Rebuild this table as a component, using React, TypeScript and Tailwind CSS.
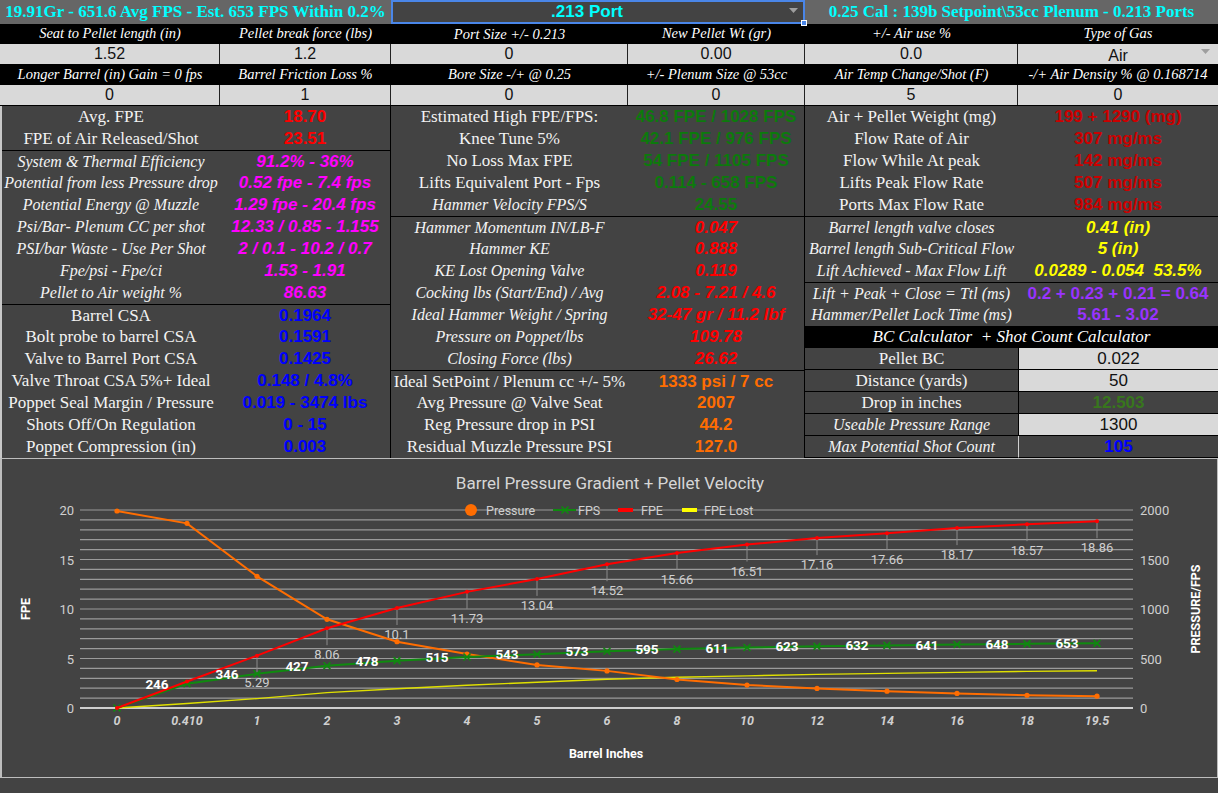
const serif = "font-['Liberation_Serif',serif]";
const sans = "font-['Liberation_Sans',Arial,sans-serif]";

type Row = { l: string; v: string; li?: boolean; c: string; t?: boolean };

const left: Row[] = [
  { l: 'Avg. FPE', v: '18.70', c: 'text-[#ff0000]' },
  { l: 'FPE of Air Released/Shot', v: '23.51', c: 'text-[#ff0000]' },
  { l: 'System & Thermal Efficiency', v: '91.2% - 36%', li: true, c: 'italic text-[#ff00ff]', t: true },
  { l: 'Potential from less Pressure drop', v: '0.52 fpe - 7.4 fps', li: true, c: 'italic text-[#ff00ff]' },
  { l: 'Potential Energy @ Muzzle', v: '1.29 fpe - 20.4 fps', li: true, c: 'italic text-[#ff00ff]' },
  { l: 'Psi/Bar- Plenum CC per shot', v: '12.33 / 0.85 - 1.155', li: true, c: 'italic text-[#ff00ff]' },
  { l: 'PSI/bar Waste - Use Per Shot', v: '2 / 0.1 - 10.2 / 0.7', li: true, c: 'italic text-[#ff00ff]' },
  { l: 'Fpe/psi - Fpe/ci', v: '1.53 - 1.91', li: true, c: 'italic text-[#ff00ff]' },
  { l: 'Pellet to Air weight %', v: '86.63', li: true, c: 'italic text-[#ff00ff]' },
  { l: 'Barrel CSA', v: '0.1964', c: 'text-[#0000ff]', t: true },
  { l: 'Bolt probe to barrel CSA', v: '0.1591', c: 'text-[#0000ff]' },
  { l: 'Valve to Barrel Port CSA', v: '0.1425', c: 'text-[#0000ff]' },
  { l: 'Valve Throat CSA 5%+ Ideal', v: '0.148 / 4.8%', c: 'text-[#0000ff]' },
  { l: 'Poppet Seal Margin / Pressure', v: '0.019 - 3474 lbs', c: 'text-[#0000ff]' },
  { l: 'Shots Off/On Regulation', v: '0 - 15', c: 'text-[#0000ff]' },
  { l: 'Poppet Compression (in)', v: '0.003', c: 'text-[#0000ff]' },
];

const middle: Row[] = [
  { l: 'Estimated High FPE/FPS:', v: '46.8 FPE / 1028 FPS', c: 'text-[#0c7a0c]' },
  { l: 'Knee Tune 5%', v: '42.1 FPE / 976 FPS', c: 'text-[#0c7a0c]' },
  { l: 'No Loss Max FPE', v: '54 FPE / 1105 FPS', c: 'text-[#0c7a0c]' },
  { l: 'Lifts Equivalent Port - Fps', v: '0.114 - 658 FPS', c: 'text-[#0c7a0c]' },
  { l: 'Hammer Velocity FPS/S', v: '24.55', li: true, c: 'text-[#0c7a0c]' },
  { l: 'Hammer Momentum IN/LB-F', v: '0.047', li: true, c: 'italic text-[#ff0000]', t: true },
  { l: 'Hammer KE', v: '0.888', li: true, c: 'italic text-[#ff0000]' },
  { l: 'KE Lost Opening Valve', v: '0.119', li: true, c: 'italic text-[#ff0000]' },
  { l: 'Cocking lbs (Start/End) / Avg', v: '2.08 - 7.21 / 4.6', li: true, c: 'italic text-[#ff0000]' },
  { l: 'Ideal Hammer Weight / Spring', v: '32-47 gr / 11.2 lbf', li: true, c: 'italic text-[#ff0000]' },
  { l: 'Pressure on Poppet/lbs', v: '109.78', li: true, c: 'italic text-[#ff0000]' },
  { l: 'Closing Force (lbs)', v: '26.62', li: true, c: 'italic text-[#ff0000]' },
  { l: 'Ideal SetPoint / Plenum cc +/- 5%', v: '1333 psi / 7 cc', c: 'text-[#ff6d01]', t: true },
  { l: 'Avg Pressure @ Valve Seat', v: '2007', c: 'text-[#ff6d01]' },
  { l: 'Reg Pressure drop in PSI', v: '44.2', c: 'text-[#ff6d01]' },
  { l: 'Residual Muzzle Pressure PSI', v: '127.0', c: 'text-[#ff6d01]' },
];

const right: Row[] = [
  { l: 'Air + Pellet Weight (mg)', v: '199 + 1290 (mg)', c: 'text-[#cc0000]' },
  { l: 'Flow Rate of Air', v: '307 mg/ms', c: 'text-[#cc0000]' },
  { l: 'Flow While At peak', v: '142 mg/ms', c: 'text-[#cc0000]' },
  { l: 'Lifts Peak Flow Rate', v: '507 mg/ms', c: 'text-[#cc0000]' },
  { l: 'Ports Max Flow Rate', v: '984 mg/ms', c: 'text-[#cc0000]' },
  { l: 'Barrel length valve closes', v: '0.41 (in)', li: true, c: 'italic text-[#ffff00]', t: true },
  { l: 'Barrel length Sub-Critical Flow', v: '5 (in)', li: true, c: 'italic text-[#ffff00]' },
  { l: 'Lift Achieved - Max Flow Lift', v: '0.0289 - 0.054  53.5%', li: true, c: 'italic text-[#ffff00]' },
  { l: 'Lift + Peak + Close = Ttl (ms)', v: '0.2 + 0.23 + 0.21 = 0.64', li: true, c: 'text-[#9933ff]', t: true },
  { l: 'Hammer/Pellet Lock Time (ms)', v: '5.61 - 3.02', li: true, c: 'text-[#9933ff]' },
];

function DataRow({ r, lw }: { r: Row; lw: string }) {
  return (
    <div className={`flex h-[22px] ${r.t ? 'border-t border-black' : ''}`}>
      <div
        className={`${lw} flex items-center justify-center whitespace-nowrap text-[#f3f3f3] ${serif} ${r.li ? 'italic text-[16px]' : 'text-[17px]'}`}
      >
        {r.l}
      </div>
      <div className={`flex-1 flex items-center justify-center whitespace-pre text-[17px] font-bold ${sans} ${r.c}`}>
        {r.v}
      </div>
    </div>
  );
}

function Caret() {
  return (
    <svg width="9" height="5" viewBox="0 0 9 5">
      <polygon points="0,0 9,0 4.5,5" fill="#9e9e9e" />
    </svg>
  );
}

const cats = ['0', '0.410', '1', '2', '3', '4', '5', '6', '8', '10', '12', '14', '16', '18', '19.5'];
const fpe = [0, 2.68, 5.29, 8.06, 10.1, 11.73, 13.04, 14.52, 15.66, 16.51, 17.16, 17.66, 18.17, 18.57, 18.86];
const fps = [0, 246, 346, 427, 478, 515, 543, 573, 595, 611, 623, 632, 641, 648, 653];
const pressure = [1990, 1865, 1330, 896, 670, 545, 435, 375, 288, 232, 198, 170, 147, 129, 119];
const lost = [0, 0.45, 0.95, 1.55, 1.95, 2.3, 2.6, 2.9, 3.1, 3.25, 3.4, 3.5, 3.6, 3.7, 3.77];

const X = (i: number) => 117 + i * 70;
const YL = (v: number) => 708 - v * 9.9;
const YR = (v: number) => 708 - v * 0.099;
const pts = (arr: number[], y: (v: number) => number) => arr.map((v, i) => `${X(i)},${y(v)}`).join(' ');

function Chart() {
  return (
    <svg width="1214" height="318" className="block" fontFamily="Roboto, 'Liberation Sans', sans-serif">
      <g transform="translate(-2 -459)">
        <text x="610" y="489" textAnchor="middle" fontSize="17" fill="#d6d6d6">
          Barrel Pressure Gradient + Pellet Velocity
        </text>
        {Array.from({ length: 21 }, (_, v) => (
          <line
            key={v}
            x1="80"
            x2="1133"
            y1={YL(v)}
            y2={YL(v)}
            stroke={v === 0 ? '#cfcfcf' : '#9a9a9a'}
            strokeWidth={v === 0 ? 2 : 1.2}
          />
        ))}
        {[0, 5, 10, 15, 20].map((v) => (
          <text key={v} x="74" y={YL(v) + 5} textAnchor="end" fontSize="13" fill="#d0d0d0">
            {v}
          </text>
        ))}
        {[0, 500, 1000, 1500, 2000].map((v) => (
          <text key={v} x="1140" y={YR(v) + 5} fontSize="13" fill="#d0d0d0">
            {v}
          </text>
        ))}
        {cats.map((c, i) => (
          <text key={c} x={X(i)} y="725" textAnchor="middle" fontSize="12.5" fontWeight="bold" fontStyle="italic" fill="#d0d0d0">
            {c}
          </text>
        ))}
        <text x="606" y="758" textAnchor="middle" fontSize="12.5" fontWeight="bold" fill="#ffffff">
          Barrel Inches
        </text>
        <text transform="translate(30 609) rotate(-90)" textAnchor="middle" fontSize="12.5" fontWeight="bold" fill="#ffffff">
          FPE
        </text>
        <text transform="translate(1200 609) rotate(-90)" textAnchor="middle" fontSize="12.5" fontWeight="bold" fill="#ffffff">
          PRESSURE/FPS
        </text>

        {/* legend */}
        <circle cx="471" cy="510" r="6" fill="#ff6d01" />
        <text x="486" y="514.5" fontSize="12.5" fill="#d0d0d0">Pressure</text>
        <line x1="553" x2="576" y1="510" y2="510" stroke="#0f8a0f" strokeWidth="2" />
        <path d="M561.5 506.5 L568.5 513.5 M568.5 506.5 L561.5 513.5" stroke="#0f8a0f" strokeWidth="1.6" />
        <text x="578" y="514.5" fontSize="12.5" fill="#d0d0d0">FPS</text>
        <rect x="618" y="508" width="15" height="4" fill="#ff0000" />
        <text x="641" y="514.5" fontSize="12.5" fill="#d0d0d0">FPE</text>
        <rect x="682" y="508" width="15" height="4" fill="#ffff00" />
        <text x="704" y="514.5" fontSize="12.5" fill="#d0d0d0">FPE Lost</text>

        {/* FPE leader lines + labels */}
        {fpe.map((v, i) =>
          i < 2 ? null : (
            <g key={i}>
              <line x1={X(i)} x2={X(i)} y1={YL(v)} y2={YL(v) + 17} stroke="#8c8c8c" strokeWidth="1" />
              <text x={X(i)} y={YL(v) + 31} textAnchor="middle" fontSize="13" fill="#cfcfcf">
                {v === 10.1 ? '10.1' : v.toFixed(2)}
              </text>
            </g>
          ),
        )}

        <polyline points={pts(lost, YL)} fill="none" stroke="#e0e000" strokeWidth="1.4" />
        <polyline points={pts(pressure, YR)} fill="none" stroke="#ff6d01" strokeWidth="2" />
        {pressure.map((v, i) => (
          <circle key={i} cx={X(i)} cy={YR(v)} r="2.6" fill="#ff6d01" />
        ))}
        <polyline points={pts(fps, YR)} fill="none" stroke="#0f8a0f" strokeWidth="2" />
        {fps.map((v, i) => (
          <path
            key={i}
            d={`M${X(i) - 3.5} ${YR(v) - 3.5} L${X(i) + 3.5} ${YR(v) + 3.5} M${X(i) + 3.5} ${YR(v) - 3.5} L${X(i) - 3.5} ${YR(v) + 3.5}`}
            stroke="#0f8a0f"
            strokeWidth="1.6"
          />
        ))}
        <polyline points={pts(fpe, YL)} fill="none" stroke="#ff0000" strokeWidth="2" />
        {fpe.map((v, i) => (
          <circle key={i} cx={X(i)} cy={YL(v)} r="2" fill="#ff0000" />
        ))}
        {fps.map((v, i) =>
          i === 0 ? null : (
            <text key={i} x={X(i) - 30} y={YR(v) + 5} textAnchor="middle" fontSize="13.5" fontWeight="bold" fill="#ffffff">
              {v}
            </text>
          ),
        )}
      </g>
    </svg>
  );
}

export default function App() {
  const blackLabel = `flex items-center justify-center whitespace-nowrap bg-black text-[14.5px] italic text-white ${serif}`;
  const input = `flex items-center justify-center bg-[#d9d9d9] text-[16px] text-[#111] border-r border-[#222] ${sans}`;

  return (
    <div className="w-[1218px] h-[793px] overflow-hidden bg-[#434343]">
      {/* header grid */}
      <div className="grid grid-cols-[220px_171px_237px_177px_213px_200px]">
        <div className={`col-span-2 h-[24px] flex items-center justify-center bg-[#666666] text-[17px] font-bold text-[#00ffff] whitespace-nowrap ${serif}`}>
          19.91Gr - 651.6 Avg FPS - Est. 653 FPS Within 0.2%
        </div>
        <div className="col-span-2 relative h-[24px] flex items-center justify-center pr-[22px] bg-[#434343] border-2 border-[#4a86e8]">
          <span className={`text-[17px] font-bold text-[#00ffff] ${sans}`}>.213 Port</span>
          <span className="absolute right-[5px] top-[6px]">
            <Caret />
          </span>
          <span className="absolute right-[-4px] bottom-[-4px] w-[6px] h-[6px] bg-[#4a86e8] border border-white" />
        </div>
        <div className={`col-span-2 h-[24px] flex items-center justify-center bg-[#666666] text-[17px] font-bold text-[#00ffff] whitespace-nowrap ${serif}`}>
          0.25 Cal : 139b Setpoint\53cc Plenum - 0.213 Ports
        </div>

        <div className={`h-[20px] ${blackLabel}`}>Seat to Pellet length (in)</div>
        <div className={`h-[20px] ${blackLabel}`}>Pellet break force (lbs)</div>
        <div className={`h-[20px] ${blackLabel} items-start`}>Port Size +/- 0.213</div>
        <div className={`h-[20px] ${blackLabel}`}>New Pellet Wt (gr)</div>
        <div className={`h-[20px] ${blackLabel}`}>+/- Air use %</div>
        <div className={`h-[20px] ${blackLabel}`}>Type of Gas</div>

        <div className={`h-[20px] ${input}`}>1.52</div>
        <div className={`h-[20px] ${input}`}>1.2</div>
        <div className={`h-[20px] ${input}`}>0</div>
        <div className={`h-[20px] ${input}`}>0.00</div>
        <div className={`h-[20px] ${input}`}>0.0</div>
        <div className={`h-[20px] relative ${input} border-r-0 pt-[3px]`}>
          Air
          <span className="absolute right-[8px] top-[5px]">
            <Caret />
          </span>
        </div>

        <div className={`h-[21px] ${blackLabel}`}>Longer Barrel (in) Gain = 0 fps</div>
        <div className={`h-[21px] ${blackLabel}`}>Barrel Friction Loss %</div>
        <div className={`h-[21px] ${blackLabel} items-start`}>Bore Size -/+ @ 0.25</div>
        <div className={`h-[21px] ${blackLabel}`}>+/- Plenum Size @ 53cc</div>
        <div className={`h-[21px] ${blackLabel}`}>Air Temp Change/Shot (F)</div>
        <div className={`h-[21px] ${blackLabel}`}>-/+ Air Density % @ 0.168714</div>

        <div className={`h-[20px] ${input}`}>0</div>
        <div className={`h-[20px] ${input}`}>1</div>
        <div className={`h-[20px] ${input}`}>0</div>
        <div className={`h-[20px] ${input}`}>0</div>
        <div className={`h-[20px] ${input}`}>5</div>
        <div className={`h-[20px] ${input} bg-[#cccccc] border-r-0`}>0</div>
      </div>

      <div className="h-[1px] bg-black" />

      {/* data sections */}
      <div className="flex h-[352px]">
        <div className="w-[391px] border-l-2 border-l-[#c8c8c8] border-r border-r-black">
          {left.map((r) => (
            <DataRow key={r.l} r={r} lw="w-[218px]" />
          ))}
        </div>
        <div className="w-[414px] border-r border-black">
          {middle.map((r) => (
            <DataRow key={r.l} r={r} lw="w-[237px]" />
          ))}
        </div>
        <div className="w-[413px]">
          {right.map((r) => (
            <DataRow key={r.l} r={r} lw="w-[213px]" />
          ))}
          <div className={`h-[22px] flex items-center justify-center bg-black text-[17px] italic text-white whitespace-pre ${serif}`}>
            BC Calculator  + Shot Count Calculator
          </div>
          <div className="grid grid-cols-[213px_200px] grid-rows-[repeat(5,22px)]">
            <div className={`flex items-center justify-center border-b border-black text-[17px] text-[#f3f3f3] ${serif}`}>Pellet BC</div>
            <div className={`flex items-center justify-center border-b border-l border-black bg-[#d9d9d9] text-[17px] text-[#111] ${sans}`}>0.022</div>
            <div className={`flex items-center justify-center border-b border-black text-[17px] text-[#f3f3f3] ${serif}`}>Distance (yards)</div>
            <div className={`flex items-center justify-center border-b border-l border-black bg-[#d9d9d9] text-[17px] text-[#111] ${sans}`}>50</div>
            <div className={`flex items-center justify-center border-b border-black text-[17px] text-[#f3f3f3] ${serif}`}>Drop in inches</div>
            <div className={`flex items-center justify-center border-b border-l border-black text-[17px] font-bold text-[#38761d] ${sans}`}>12.503</div>
            <div className={`flex items-center justify-center border-b border-black text-[16px] italic text-[#f3f3f3] ${serif}`}>Useable Pressure Range</div>
            <div className={`flex items-center justify-center border-b border-l border-black bg-[#d9d9d9] text-[17px] text-[#111] ${sans}`}>1300</div>
            <div className={`flex items-center justify-center border-b border-black text-[16px] italic text-[#f3f3f3] ${serif}`}>Max Potential Shot Count</div>
            <div className={`flex items-center justify-center border-b border-l border-l-[#d0d0d0] border-b-black text-[17px] font-bold text-[#0000ff] ${sans}`}>105</div>
          </div>
        </div>
      </div>

      {/* chart */}
      <div className="h-[320px] border-t border-l-2 border-b border-r border-[#bdbdbd] bg-[#434343]">
        <Chart />
      </div>
      <div className="h-[15px] bg-[#434343]" />
    </div>
  );
}
